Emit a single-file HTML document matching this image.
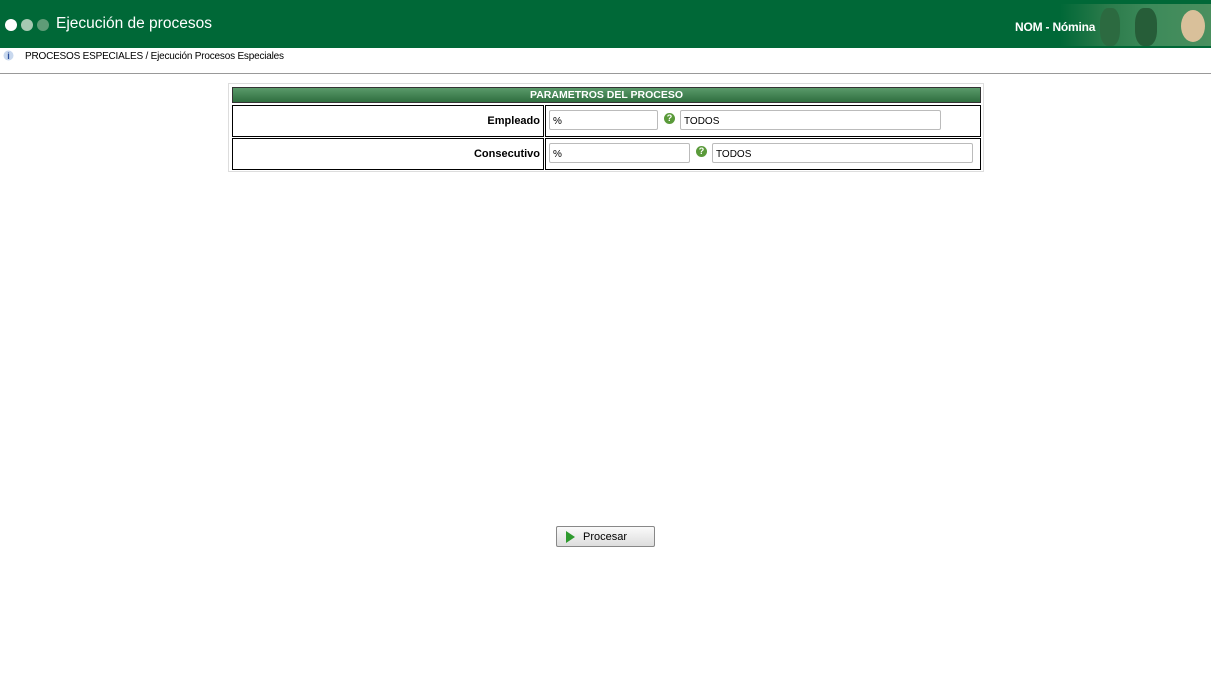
<!DOCTYPE html>
<html><head><meta charset="utf-8"><style>
body{margin:0;width:1211px;height:691px;background:#fff;font-family:"Liberation Sans",sans-serif;position:relative;overflow:hidden}
.hdr{position:absolute;left:0;top:0;width:1211px;height:48px;background:#006837}
.dot{position:absolute;top:19px;width:12px;height:12px;border-radius:50%}
.title{position:absolute;left:56px;top:15px;color:#fff;font-size:15.5px}
.photo{position:absolute;left:1060px;top:4px;width:151px;height:42px;background:linear-gradient(90deg,#006837,#2a7a4a 30%,#3d8a5a 60%,#4a8f5e)}
.nom{position:absolute;left:1015px;top:20px;color:#fff;font-weight:bold;font-size:12px;letter-spacing:-0.2px}
.crumb{position:absolute;left:25px;top:51px;font-size:10px;color:#000;letter-spacing:-0.2px}
.line{position:absolute;left:0;top:73px;width:1211px;height:1px;background:#999}
.tbl{position:absolute;left:228px;top:83px;width:754px;height:87px;border:1px solid #ddd}
.th{position:absolute;left:3px;top:3px;width:749px;height:16px;background:linear-gradient(#5a9a6a,#2f6e3f);border:1px solid #333;box-sizing:border-box;color:#fff;font-weight:bold;font-size:10.5px;text-align:center;line-height:15px}
.cell{position:absolute;border:1px solid #000;box-sizing:border-box;font-size:11px}
.lab{text-align:right;font-weight:bold;padding-right:3px}
.inp{position:absolute;height:20px;border:1px solid #bbb;border-radius:2px;box-sizing:border-box;font-size:10px;padding-left:3px;line-height:21px;background:#fff}
.q{position:absolute;width:11px;height:11px;border-radius:50%;background:#5a9a3a;color:#fff;font-size:9px;font-weight:bold;text-align:center;line-height:11px}
.btn{position:absolute;left:556px;top:526px;width:99px;height:21px;border:1px solid #888;border-radius:2px;box-sizing:border-box;background:linear-gradient(#fafafa,#ddd);font-size:11px}
</style></head><body>
<div class="hdr">
<div class="dot" style="left:5px;background:#fff"></div>
<div class="dot" style="left:21px;background:#a6c9b2"></div>
<div class="dot" style="left:37px;background:#5f9c77"></div>
<div class="title">Ejecución de procesos</div>
<div class="photo"><div style="position:absolute;right:6px;top:6px;width:24px;height:32px;border-radius:50%;background:#d9c09a"></div><div style="position:absolute;left:40px;top:4px;width:20px;height:38px;border-radius:40%;background:#2c6a40"></div><div style="position:absolute;left:75px;top:4px;width:22px;height:38px;border-radius:40%;background:#265d38"></div></div>
<div class="nom">NOM - Nómina</div>
</div>
<svg style="position:absolute;left:3px;top:50px" width="11" height="11"><circle cx="5.5" cy="5.5" r="5" fill="#c8d8ee"/><text x="5.5" y="9" font-size="9" text-anchor="middle" fill="#2a4d9a" font-weight="bold" font-family="Liberation Sans">i</text></svg>
<div class="crumb">PROCESOS ESPECIALES / Ejecución Procesos Especiales</div>
<div class="line"></div>
<div class="tbl">
<div class="th">PARAMETROS DEL PROCESO</div>
<div class="cell lab" style="left:3px;top:21px;width:312px;height:32px;line-height:30px">Empleado</div>
<div class="cell" style="left:316px;top:21px;width:436px;height:32px"></div>
<div class="cell lab" style="left:3px;top:54px;width:312px;height:32px;line-height:30px">Consecutivo</div>
<div class="cell" style="left:316px;top:54px;width:436px;height:32px"></div>
<div class="inp" style="left:320px;top:26px;width:109px">%</div>
<div class="q" style="left:435px;top:29px">?</div>
<div class="inp" style="left:451px;top:26px;width:261px">TODOS</div>
<div class="inp" style="left:320px;top:59px;width:141px">%</div>
<div class="q" style="left:467px;top:62px">?</div>
<div class="inp" style="left:483px;top:59px;width:261px">TODOS</div>
</div>
<div class="btn"><svg style="position:absolute;left:8px;top:4px" width="10" height="12"><path d="M1 0L10 6L1 12Z" fill="#2e9a2e"/></svg><span style="position:absolute;left:26px;top:4px">Procesar</span></div>
</body></html>
